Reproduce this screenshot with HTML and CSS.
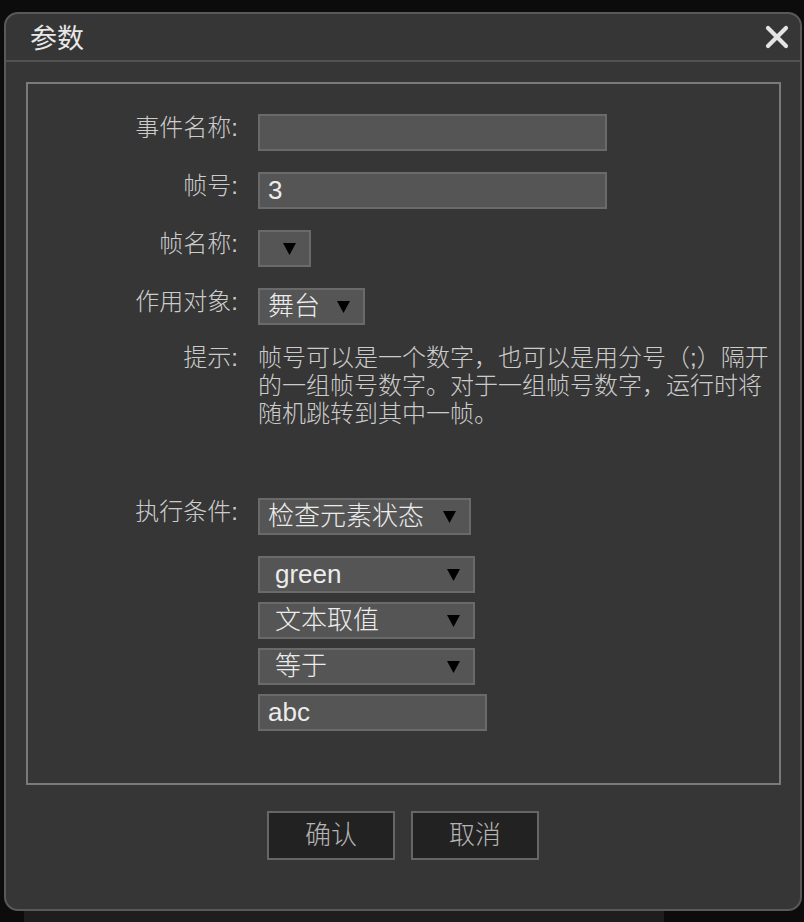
FILE: index.html
```html
<!DOCTYPE html>
<html lang="zh-CN">
<head>
<meta charset="utf-8">
<title>参数</title>
<link rel="stylesheet" href="styles.css">
</head>
<body>
<div class="dialog">
  <div class="titlebar">
    <span class="title">参数</span>
    <svg class="close" width="26" height="26" viewBox="0 0 26 26"><path d="M4 4 L22 22 M22 4 L4 22" stroke="#e4e4e4" stroke-width="4.2" stroke-linecap="round"/></svg>
  </div>
  <div class="panel">
    <div class="row">
      <div class="label">事件名称:</div>
      <div class="field input w349"></div>
    </div>
    <div class="row">
      <div class="label">帧号:</div>
      <div class="field input w349">3</div>
    </div>
    <div class="row">
      <div class="label">帧名称:</div>
      <div class="field select w53"><span class="val"></span><svg class="tri" width="13" height="13" viewBox="0 0 13 13"><polygon points="0,1 13,1 6.5,13" fill="#000"/></svg></div>
    </div>
    <div class="row">
      <div class="label">作用对象:</div>
      <div class="field select w107"><span class="val">舞台</span><svg class="tri" width="13" height="13" viewBox="0 0 13 13"><polygon points="0,1 13,1 6.5,13" fill="#000"/></svg></div>
    </div>
    <div class="row hintrow">
      <div class="label">提示:</div>
      <div class="hint">
        <div class="hline">帧号可以是一个数字，也可以是用分号（;）隔开</div>
        <div class="hline">的一组帧号数字。对于一组帧号数字，运行时将</div>
        <div class="hline">随机跳转到其中一帧。</div>
      </div>
    </div>
    <div class="row condrow">
      <div class="label">执行条件:</div>
      <div class="field select w213"><span class="val">检查元素状态</span><svg class="tri" width="13" height="13" viewBox="0 0 13 13"><polygon points="0,1 13,1 6.5,13" fill="#000"/></svg></div>
    </div>
    <div class="stack">
      <div class="field select w217 pad17"><span class="val">green</span><svg class="tri" width="13" height="13" viewBox="0 0 13 13"><polygon points="0,1 13,1 6.5,13" fill="#000"/></svg></div>
      <div class="field select w217 pad17"><span class="val">文本取值</span><svg class="tri" width="13" height="13" viewBox="0 0 13 13"><polygon points="0,1 13,1 6.5,13" fill="#000"/></svg></div>
      <div class="field select w217 pad17"><span class="val">等于</span><svg class="tri" width="13" height="13" viewBox="0 0 13 13"><polygon points="0,1 13,1 6.5,13" fill="#000"/></svg></div>
      <div class="field input w229">abc</div>
    </div>
  </div>
  <div class="buttons">
    <div class="btn">确认</div>
    <div class="btn">取消</div>
  </div>
</div>
<div class="underbar"></div>
</body>
</html>
```
FILE: styles.css
```css
html, body {
  margin: 0;
  padding: 0;
}
body {
  background: #0c0c0c;
  width: 804px;
  height: 922px;
  overflow: hidden;
  font-family: "Liberation Sans", "Noto Sans CJK SC", sans-serif;
  font-weight: 300;
}
.dialog {
  box-sizing: border-box;
  margin: 12px 0 0 4px;
  width: 798px;
  height: 899px;
  background: #363636;
  border: 2px solid #595959;
  border-radius: 14px;
  overflow: hidden;
}
.titlebar {
  height: 46px;
  border-bottom: 2px solid #525252;
  display: flex;
  align-items: center;
  justify-content: space-between;
  padding: 0 10px 0 24px;
}
.title {
  font-size: 27px;
  font-weight: 400;
  color: #e8e8e8;
  line-height: 46px;
  padding-top: 4px;
}
.close {
  display: block;
}
.panel {
  box-sizing: border-box;
  margin: 20px 19px 0 20px;
  height: 703px;
  border: 2px solid #7a7a7a;
  padding-top: 30px;
}
.row {
  display: flex;
  align-items: flex-start;
  margin-bottom: 21px;
}
.label {
  width: 210px;
  margin-right: 20px;
  text-align: right;
  font-size: 24px;
  line-height: 28px;
  color: #cccccc;
  flex: none;
}
.field {
  box-sizing: border-box;
  height: 37px;
  background: #555555;
  border: 2px solid #6a6a6a;
  font-size: 26px;
  line-height: 33px;
  color: #ececec;
  flex: none;
}
.input {
  padding-left: 8px;
  font-weight: 400;
}
.select {
  display: flex;
  align-items: center;
  padding: 0 13px 0 8px;
}
.select .val {
  flex: 1;
  white-space: nowrap;
}
.tri {
  display: block;
  flex: none;
}
.pad17 {
  padding-left: 15px;
}
.w349 { width: 349px; }
.w53 { width: 53px; }
.w107 { width: 107px; }
.w213 { width: 213px; }
.w217 { width: 217px; }
.w229 { width: 229px; }
.hintrow {
  margin-top: -2px;
}
.hint {
  font-size: 24px;
  color: #cccccc;
  white-space: nowrap;
}
.hline {
  height: 28px;
  line-height: 28px;
}
.condrow {
  margin-top: 70px;
}
.stack {
  margin-left: 230px;
  display: flex;
  flex-direction: column;
  gap: 9px;
}
.buttons {
  display: flex;
  justify-content: center;
  gap: 16px;
  margin-top: 26px;
}
.btn {
  box-sizing: border-box;
  width: 128px;
  height: 49px;
  background: #222222;
  border: 2px solid #666666;
  color: #b4b4b4;
  font-size: 26px;
  line-height: 45px;
  text-align: center;
}
.underbar {
  margin-left: 24px;
  width: 640px;
  height: 11px;
  background: #1e1e1e;
}
```
